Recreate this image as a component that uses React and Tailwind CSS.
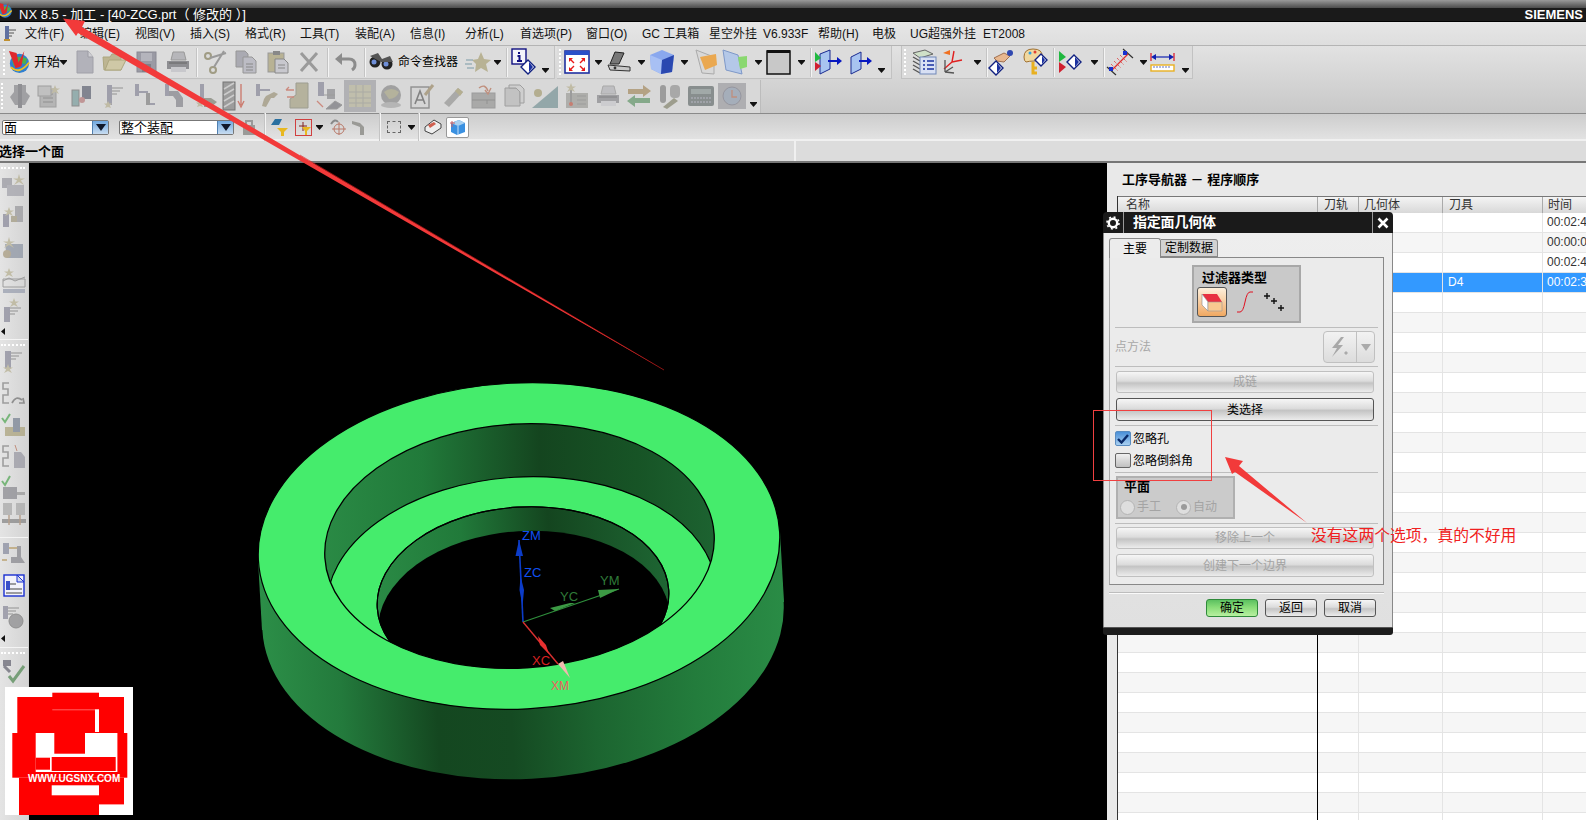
import React from "react";

const S = ({ w = 26, h = 26, vb = "0 0 26 26", children }) => (
  <svg width={w} height={h} viewBox={vb} className="block shrink-0">{children}</svg>
);
const Cell = ({ w, children }) => <div className={`${w} h-full flex items-center justify-center shrink-0`}>{children}</div>;
const Caret = ({ low }) => (
  <div className={low ? "pt-[17px]" : ""}>
    <svg width="7" height="5" viewBox="0 0 7 5" className="block"><path d="M0 0H7V1L3.5 5L0 1Z" fill="#111" /></svg>
  </div>
);
const Sep = () => <div className="w-[2px] h-[29px] shrink-0 bg-[#f4f4f4] border-l border-[#c4c4c4]" />;
const Grip = () => <div className="w-[2px] h-[26px] shrink-0 border-l-2 border-dotted border-white" />;

const T = ({ x = 9, y = 3, w = 5, h = 16, f = "#8c8c9c" }) => <rect x={x} y={y} width={w} height={h} fill={f} />;
const Burst = ({ x = 17, y = 6, r = 5 }) => (
  <path d={`M${x} ${y - r}L${x + 1.3} ${y - 1.5}L${x + r} ${y - 1.6}L${x + 1.8} ${y + .5}L${x + r - 1} ${y + r - 1}L${x} ${y + 2}L${x - r + 1} ${y + r - 1}L${x - 1.8} ${y + .5}L${x - r} ${y - 1.6}L${x - 1.3} ${y - 1.5}Z`} fill="#b8b294" />
);
const Lines = ({ x = 14, y = 6 }) => <path d={`M${x} ${y}H${x + 11}M${x} ${y + 3}H${x + 8}M${x} ${y + 6}H${x + 5}`} stroke="#9a9a9a" strokeWidth="1.3" fill="none" />;

const NxLogo = ({ s = 25 }) => (
  <S w={s} h={s}>
    <ellipse cx="14" cy="14" rx="10" ry="10" fill="#2f7fd0" />
    <path d="M6 9Q14 5 22 9L20 15Q14 11 8 17Z" fill="#4fb04a" />
    <path d="M5 18Q14 26 24 13" stroke="#f0c020" strokeWidth="2" fill="none" />
    <path d="M3 1L11 3L13 13L19 1L16 17L10 19Z" fill="#e0282c" />
  </S>
);
const NewDoc = () => <S><path d="M5 2H16L21 8V24H5Z" fill="#b2b2ba" stroke="#a0a0a8" /><path d="M16 2V8H21" fill="#cfcfd4" stroke="#9c9ca4" /></S>;
const Open = () => <S><path d="M2 8H9L11 5H20V21H3Z" fill="#bdb592" stroke="#aca67f" /><path d="M4 21L8 11H25L20 21Z" fill="#cfc8a6" stroke="#aca67f" /></S>;
const Save = () => <S><rect x="4" y="3" width="19" height="20" fill="#9a9aa4" stroke="#8a8a94" /><rect x="8" y="4" width="11" height="8" fill="#b4b4bc" /><rect x="9" y="15" width="9" height="8" fill="#808088" /></S>;
const Printer = () => <S><path d="M8 3H19L21 11H6Z" fill="#b6b6ba" stroke="#999" /><path d="M2 12H24V20H2Z" fill="#8e8e92" /><rect x="6" y="18" width="15" height="5" fill="#c8c8cc" /><path d="M4 14H22" stroke="#666" /></S>;
const Scissors = () => <S><circle cx="6" cy="7" r="3" fill="none" stroke="#a09c84" strokeWidth="2" /><circle cx="11" cy="21" r="3" fill="none" stroke="#a09c84" strokeWidth="2" /><path d="M8 9L24 4M12 18L22 2" stroke="#9a9a9a" strokeWidth="2" /></S>;
const Copy = () => <S><path d="M3 2H12L15 5V18H3Z" fill="#aaaab2" stroke="#969696" /><path d="M10 8H19L23 12V24H10Z" fill="#bcbcc4" stroke="#969696" /><path d="M13 15H20M13 18H20M13 21H20" stroke="#888" /></S>;
const Paste = () => <S><rect x="3" y="4" width="16" height="19" fill="#b8b294" stroke="#999" /><rect x="8" y="2" width="7" height="4" fill="#888" /><path d="M10 10H19L23 14V24H10Z" fill="#c8c8ce" stroke="#888" /><path d="M13 16H20M13 19H20" stroke="#888" /></S>;
const Del = () => <S><path d="M5 4L21 22M21 4L5 22" stroke="#9a9a9a" strokeWidth="3" /></S>;
const Undo = () => <S><path d="M8 10H16Q22 10 22 16Q22 19 19 21" stroke="#8c8c8c" strokeWidth="3" fill="none" /><path d="M9 4V16L2 10Z" fill="#8c8c8c" /></S>;
const Binoc = () => <S><circle cx="7" cy="13" r="5.5" fill="#222" /><circle cx="19" cy="15" r="5.5" fill="#222" /><circle cx="6" cy="13" r="2.5" fill="#6f8fd8" /><circle cx="18" cy="15" r="2.5" fill="#6f8fd8" /><path d="M2 7L10 4L14 10L22 7L25 13L13 13Z" fill="#555" /></S>;
const StarG = () => <S><path d="M16 3L19 10L26 11L21 15L23 23L16 19L10 23L11 15L7 11L13 10Z" fill="#b8b294" /><path d="M1 11H8M0 15H7M2 19H9" stroke="#9bb0b8" strokeWidth="1.5" /></S>;
const Diamond = ({ x, y, r = 6 }) => <g><path d={`M${x} ${y - r}L${x + r} ${y}L${x} ${y + r}L${x - r} ${y}Z`} fill="#fff" stroke="#102080" strokeWidth="1.4" /><path d={`M${x + 1} ${y - r + 2}L${x + r - 2} ${y}L${x + 1} ${y + r - 2}Z`} fill="#1a30a0" /></g>;
const Info = () => <S w={28} h={28} vb="0 0 28 28"><rect x="1" y="1" width="14" height="15" fill="#f4f4fa" stroke="#101080" strokeWidth="1.4" /><path d="M8 4V6M6.5 8H8.5V13M6 13H11" stroke="#101080" strokeWidth="2" fill="none" /><Diamond x={17} y={19} r={7} /></S>;
const Fit = () => <S><rect x="1" y="2" width="24" height="22" fill="#fff" stroke="#2030a0" strokeWidth="1.6" /><rect x="1" y="2" width="24" height="4" fill="#2b50c8" /><path d="M5 9L9 9L5 13ZM21 9L17 9L21 13ZM5 22L9 22L5 18ZM21 22L17 22L21 18Z" fill="#e81818" /><path d="M6 10L10 14M20 10L16 14M6 21L10 17M20 21L16 17" stroke="#e81818" strokeWidth="1.4" /></S>;
const Scanner = () => <S><path d="M9 3L18 4L13 15L4 15Z" fill="#777" stroke="#222" /><path d="M2 16L24 18L24 22L4 21Z" fill="#c8c8c8" stroke="#333" /><circle cx="9" cy="19" r="1.4" fill="#333" /></S>;
const Cube = () => <S><path d="M13 1L25 6L23 23L12 25L2 20L1 6Z" fill="#8aa8ee" /><path d="M1 6L13 11L12 25L2 20Z" fill="#a8c0f4" /><path d="M13 11L25 6L23 23L12 25Z" fill="#2a48b0" /></S>;
const FolderBox = () => <S><path d="M4 1L10 24L22 25V8Z" fill="#d8d8d8" stroke="#aaa" /><path d="M8 8L24 5L25 16L13 21Z" fill="#eaa850" /></S>;
const GreenBox = () => <S><path d="M1 1L16 6L20 25L4 21Z" fill="#b4c8e8" stroke="#7e98c8" /><path d="M16 8L25 7L25 18L18 20Z" fill="#8ad870" /></S>;
const Square = () => <S><rect x="1" y="2" width="23" height="23" fill="#c8c8c8" stroke="#111" strokeWidth="1.5" /><rect x="1" y="1" width="23" height="3" fill="#111" /></S>;
const View1 = () => <S w={30} h={26} vb="0 0 30 26"><path d="M7 5L17 1V20L7 25Z" fill="#a8c4f0" stroke="#1a2a90" /><path d="M2 3L8 9L2 13Z" fill="#20b840" /><path d="M2 13L8 17L2 22Z" fill="#d02030" /><path d="M15 12H25" stroke="#0818c0" strokeWidth="2" /><path d="M24 8L29 12L24 16Z" fill="#0818c0" /></S>;
const View2 = () => <S><path d="M3 8L13 3V20L3 25Z" fill="#a8c4f0" stroke="#1a2a90" /><path d="M11 12H20" stroke="#0818c0" strokeWidth="2" /><path d="M19 8L24 12L19 16Z" fill="#0818c0" /></S>;
const Layers = () => <S w={28} h={28} vb="0 0 28 28"><path d="M3 5L15 2L23 6L10 10Z" fill="#cfe0c8" stroke="#666" /><path d="M3 9L10 13M3 13L10 17M3 17L10 21M3 21L10 25" stroke="#555" strokeWidth="1.4" /><rect x="10" y="9" width="16" height="17" fill="#d8e0f4" stroke="#7088b8" /><path d="M13 13H15M17 13H24M13 17H15M17 17H24M13 21H15M17 21H24" stroke="#1830a0" strokeWidth="1.4" /></S>;
const Csys = () => <S w={28} h={28} vb="0 0 28 28"><path d="M12 14L22 12M12 14L4 21M12 14L14 3" stroke="#e02020" strokeWidth="1.4" /><path d="M3 5L10 2V7Z" fill="#f07020" /><path d="M5 12V24M5 24L14 25M5 24L13 19" stroke="#555" strokeWidth="1.3" fill="none" /></S>;
const Hand = () => <S w={28} h={28} vb="0 0 28 28"><path d="M6 10L16 5L22 8L16 14L9 13Z" fill="#e8b890" stroke="#a07050" /><circle cx="22" cy="5" r="3" fill="#3048b0" /><Diamond x={8} y={20} r={7} /></S>;
const Palette = () => <S w={28} h={30} vb="0 0 28 30"><path d="M3 10Q3 2 12 2Q22 2 21 10Q20 15 14 14Q8 14 5 15Q3 14 3 10Z" fill="#f0d8a0" stroke="#a07030" /><circle cx="9" cy="6" r="1.5" fill="#30a0e0" /><circle cx="14" cy="5" r="1.5" fill="#e04030" /><path d="M12 15L12 26L16 26M12 21L16 21" stroke="#e8b020" strokeWidth="3" fill="none" /><Diamond x={20} y={13} r={6} /></S>;
const Play = () => <S w={30} h={26} vb="0 0 30 26"><path d="M2 2L9 8L2 13Z" fill="#20b840" /><path d="M2 13L9 18L2 24Z" fill="#d02030" /><Diamond x={17} y={13} r={7} /></S>;
const Ratchet = () => <S w={28} h={28} vb="0 0 28 28"><path d="M1 19L10 27M17 1L27 10" stroke="#333" strokeWidth="1.2" /><path d="M6 22L22 6" stroke="#e03030" strokeWidth="1.2" /><path d="M5 16L12 23M8 13L15 20M11 10L18 17M14 7L21 14" stroke="#e03030" strokeWidth="1" strokeDasharray="1 1" /><rect x="3" y="19" width="4" height="4" fill="#1830d0" /><rect x="17" y="3" width="4" height="4" fill="#1830d0" /></S>;
const Ruler = () => <S w={26} h={24} vb="0 0 26 24"><path d="M1 3V11M24 3V11" stroke="#e01020" strokeWidth="1.2" /><path d="M3 7H22" stroke="#1020b0" strokeWidth="1.2" /><path d="M1 7L6 4V10ZM24 7L19 4V10Z" fill="#1020b0" /><rect x="1" y="15" width="23" height="6" fill="#fff" stroke="#e8b020" strokeWidth="1.4" /><path d="M4 16V18M7 16V18M10 16V18M13 16V18M16 16V18M19 16V18" stroke="#6070c0" /></S>;

const grey = [
  <S><path d="M8 2H20V9L24 13L19 22H9L4 14L8 9Z" fill="#8e8e92" /><T x={12} y={1} w={4} h={24} f="#77777c" /></S>,
  <S><rect x="3" y="6" width="16" height="18" fill="#aaa" stroke="#8c8c8c" /><path d="M6 11H16M6 15H16M6 19H16" stroke="#777" /><rect x="1" y="3" width="13" height="10" fill="#b8b8b8" stroke="#8c8c8c" /><Burst x={18} y={7} r={5} /></S>,
  <S><rect x="4" y="7" width="7" height="16" fill="#7fa0a0" stroke="#777" /><rect x="14" y="3" width="9" height="13" fill="#666a78" /><circle cx="14" cy="17" r="3" fill="#b88080" /></S>,
  <S><T x={8} y={2} w={5} h={20} /><Lines x={13} y={5} /><Burst x={9} y={22} r={4} /></S>,
  <S><T x={5} y={1} w={4} h={12} /><T x={5} y={8} w={13} h={2} /><T x={16} y={10} w={4} h={12} f="#888" /><T x={20} y={20} w={5} h={2} /></S>,
  <S><T x={4} y={1} w={4} h={12} /><path d="M8 8H17L22 15V24H15V17L12 13H8Z" fill="#8a8a90" /></S>,
  <S><T x={8} y={1} w={4} h={20} /><path d="M12 15H19L25 19L19 24H12Z" fill="#86887c" /><Burst x={8} y={21} r={4} /></S>,
  <S w={30} h={30} vb="0 0 30 30"><rect x="2" y="1" width="12" height="28" fill="#888" stroke="#555" /><path d="M3 8L13 2M3 14L13 8M3 20L13 14M3 26L13 20" stroke="#c8c8c8" strokeWidth="1.5" /><path d="M20 3V24M17 20L20 26L23 20" stroke="#c86050" strokeWidth="1.4" fill="none" /></S>,
  <S><T x={2} y={1} w={4} h={12} /><T x={6} y={6} w={10} h={2} /><path d="M12 13L20 9L24 11L20 15L17 15L12 24L8 23L10 16Z" fill="#a09880" /></S>,
  <S w={28} h={30} vb="0 0 28 30"><path d="M12 2H24V27H6V18L12 14Z" fill="#aaa68a" stroke="#8a8a7a" /><path d="M2 9L10 9M2 9L5 6M3 16L10 16" stroke="#c87060" strokeWidth="1.3" /></S>,
  <S w={28} h={30} vb="0 0 28 30"><T x={3} y={1} w={6} h={14} /><rect x="12" y="8" width="8" height="10" fill="#909094" /><path d="M9 14H20M20 20L27 24L22 28H11Z" fill="#7d7d82" stroke="#888" /><path d="M2 20L8 26" stroke="#c87060" strokeWidth="1.3" /></S>,
  <S w={32} h={32} vb="0 0 32 32"><rect x="0" y="0" width="32" height="32" fill="#a4a4a8" /><rect x="5" y="5" width="22" height="22" fill="#b8b69e" /><path d="M5 12H27M5 18H27M5 23H27M12 5V27M19 5V27" stroke="#9c9c94" /></S>,
  <S><circle cx="13" cy="12" r="10" fill="#8e8e8e" /><path d="M6 9Q13 3 21 9Q18 16 11 16Z" fill="#a8a688" /><ellipse cx="13" cy="22" rx="10" ry="3" fill="#aaa" /></S>,
  <S w={28} h={28} vb="0 0 28 28"><rect x="3" y="5" width="18" height="21" fill="#d4d4d4" stroke="#777" strokeWidth="1.4" /><path d="M7 22L12 9L17 22M9 18H15" stroke="#666" strokeWidth="1.6" fill="none" /><path d="M17 13L25 3" stroke="#a09070" strokeWidth="3" /></S>,
  <S><path d="M4 20L18 5L23 9L9 24Z" fill="#9a9a98" /><path d="M15 8L20 13L23 9L18 5Z" fill="#a8a078" /></S>,
  <S w={28} h={28} vb="0 0 28 28"><rect x="2" y="11" width="23" height="15" fill="#9a9a98" stroke="#888" /><path d="M2 18H25M17 18V22" stroke="#7a7a7a" /><path d="M9 6Q15 1 18 9M15 8L18 12L21 6" stroke="#b87860" strokeWidth="1.4" fill="none" /></S>,
  <S><path d="M3 5H14L18 9V23H3Z" fill="#bbb" stroke="#8c8c8c" /><path d="M7 2H18L22 6V20H18V9L14 5H7Z" fill="#ccc" stroke="#8c8c8c" /></S>,
  <S w={32} h={28} vb="0 0 32 28"><path d="M2 26L28 4V26Z" fill="#7d979a" /><circle cx="8" cy="11" r="4" fill="#a8a078" /></S>,
  <S w={28} h={28} vb="0 0 28 28"><rect x="3" y="11" width="22" height="15" fill="#a0a09c" /><path d="M14 14H23M14 18H23M14 22H23" stroke="#888" /><path d="M8 4V22" stroke="#888" strokeWidth="2" /><Burst x={8} y={6} r={5} /><circle cx="8" cy="22" r="2" fill="#c06050" /></S>,
  <Printer />,
  <S w={28} h={28} vb="0 0 28 28"><path d="M3 12L3 7H18V3L26 9L18 15V12Z" fill="#a89068" /><path d="M25 16V21H10V25L2 19L10 13V16Z" fill="#6a9a70" /></S>,
  <S w={28} h={28} vb="0 0 28 28"><rect x="4" y="3" width="6" height="18" rx="3" fill="#888" /><rect x="14" y="3" width="10" height="13" rx="4" fill="#999" /><path d="M7 25L18 16L22 19L11 27Z" fill="#8a8a74" /></S>,
  <S w={28} h={26} vb="0 0 28 26"><rect x="1" y="3" width="26" height="20" rx="2" fill="#6e7676" /><rect x="4" y="6" width="20" height="5" fill="#8f9a98" /><path d="M4 15H24M4 19H24" stroke="#aab" strokeDasharray="2 1" /></S>,
  <S w={28} h={28} vb="0 0 28 28"><rect x="0" y="1" width="28" height="26" fill="#a0a0a4" /><circle cx="14" cy="14" r="9" fill="#94a0b0" stroke="#80808c" /><path d="M14 8V15H19" stroke="#b87860" strokeWidth="1.3" fill="none" /></S>,
];

const side1 = [
  <S><rect x="1" y="5" width="10" height="10" fill="#9a9aa2" /><rect x="6" y="12" width="17" height="11" fill="#a4a4ac" /><Burst x={18} y={7} r={6} /></S>,
  <S><T x={2} y={10} w={6} h={13} /><rect x="14" y="2" width="8" height="16" fill="#9a9a9e" /><rect x="10" y="12" width="6" height="6" fill="#a39c84" /><Burst x={8} y={8} r={5} /></S>,
  <S><path d="M4 8H22V22H6Z" fill="#8e96a4" /><circle cx="6" cy="18" r="4" fill="#a89c80" /><Burst x={8} y={7} r={6} /></S>,
  <S><path d="M2 12H24V20H2Z" fill="none" stroke="#888" /><path d="M2 14L8 11L14 14L24 10" stroke="#888" fill="none" /><path d="M2 22H24V26H2Z" fill="#9aa0b0" /><Burst x={8} y={6} r={5} /></S>,
  <S><T x={3} y={9} w={6} h={15} /><Lines x={9} y={10} /><Burst x={13} y={5} r={5} /></S>,
];
const side2 = [
  <S><T x={4} y={2} w={6} h={18} /><Lines x={10} y={4} /><Burst x={7} y={20} r={5} /></S>,
  <S><path d="M8 2H2V8H7V14H2V22H8" stroke="#888" strokeWidth="1.6" fill="none" /><path d="M11 22Q15 14 21 19M18 22L23 22L22 17" stroke="#777" strokeWidth="1.7" fill="none" /></S>,
  <S><path d="M1 5L4 9L9 1" stroke="#55a858" strokeWidth="2" fill="none" /><rect x="4" y="14" width="20" height="9" fill="#aca47e" /><rect x="12" y="5" width="7" height="14" fill="#7a8494" /></S>,
  <S><path d="M8 2H2V8H7V14H2V22H8" stroke="#888" strokeWidth="1.6" fill="none" /><path d="M13 8H20L24 13V24H13Z" fill="#9a9aa4" /><path d="M14 1L16 7" stroke="#b87860" /></S>,
  <S><path d="M1 7L4 11L9 2" stroke="#55a858" strokeWidth="2" fill="none" /><rect x="2" y="13" width="14" height="12" fill="#8c8c92" /><rect x="16" y="18" width="8" height="3" fill="#999" /></S>,
  <S><rect x="2" y="2" width="9" height="12" fill="#aaa" /><rect x="15" y="2" width="9" height="12" fill="#aaa" /><rect x="1" y="18" width="24" height="4" fill="#888" /><path d="M8 14V24M19 14V24" stroke="#a98b70" strokeWidth="1.4" /></S>,
];
const side3 = [
  <S><rect x="2" y="2" width="6" height="11" fill="#8a8ea0" /><path d="M8 7L18 7M1 19L6 19" stroke="#b09050" strokeWidth="1.5" /><path d="M10 16H16V5H20V16L24 22H10Z" fill="#8a8a90" /></S>,
  <S><rect x="3" y="2" width="20" height="21" fill="#f2f2fa" stroke="#1a30d0" strokeWidth="1.4" /><rect x="5" y="8" width="4" height="9" fill="#3a50c8" /><path d="M9 11H15M9 16H21M5 20H21" stroke="#444" /><path d="M16 2L23 9H16Z" fill="#cfd8ee" stroke="#1a30d0" /></S>,
  <S><T x={2} y={2} w={5} h={13} /><Lines x={7} y={4} /><circle cx="15" cy="17" r="7" fill="#8e8e90" stroke="#777" /></S>,
];

const menus = [
  ["文件(F)", "w-[55px]"], ["编辑(E)", "w-[55px]"], ["视图(V)", "w-[55px]"], ["插入(S)", "w-[55px]"], ["格式(R)", "w-[55px]"],
  ["工具(T)", "w-[55px]"], ["装配(A)", "w-[55px]"], ["信息(I)", "w-[55px]"], ["分析(L)", "w-[55px]"], ["首选项(P)", "w-[66px]"],
  ["窗口(O)", "w-[56px]"], ["GC 工具箱", "w-[67px]"], ["星空外挂", "w-[54px]"], ["V6.933F", "w-[55px]"], ["帮助(H)", "w-[54px]"],
  ["电极", "w-[38px]"], ["UG超强外挂", "w-[73px]"], ["ET2008", "w-[50px]"],
];

const Combo = ({ w, text }) => (
  <div className={`${w} h-[15px] shrink-0 flex bg-white border border-[#777] rounded-[2px]`}>
    <div className="flex-1 text-[13px] leading-[14px] text-black pl-[1px] overflow-hidden">{text}</div>
    <div className="w-[16px] bg-linear-to-b from-[#6fa8e0] to-[#c8dcf0] border-l border-[#5080b0] flex items-center justify-center">
      <svg width="10" height="7" viewBox="0 0 10 7"><path d="M0 0H10L5 7Z" fill="#10182a" /></svg>
    </div>
  </div>
);

const Btn = ({ children, strong, cls = "" }) => (
  <div className={`ml-[6px] w-[258px] ${cls} flex items-center justify-center text-[12px] rounded-[3px] border ${strong ? "border-[#555] text-black" : "border-[#c0c0c0] text-[#a4a4a4]"} bg-[linear-gradient(#f6f6f6,#dcdcdc_45%,#c4c4c4_55%,#ececec)]`}>{children}</div>
);
const HSep = () => <div className="mx-[5px] h-[1px] bg-[#bdbdbd]" />;
const FootBtn = ({ children, green, cls = "" }) => (
  <div className={`w-[52px] h-[18px] flex items-center justify-center text-[12px] text-black rounded-[3px] border ${green ? "border-[#2f8a3a] bg-[linear-gradient(#5cc060,#88dc78_45%,#b8f0a0)]" : "border-[#555] bg-[linear-gradient(#f6f6f6,#dcdcdc_45%,#c4c4c4_55%,#ececec)]"} ${cls}`}>{children}</div>
);

const Model = () => (
  <svg width="1078" height="657" viewBox="29 163 1078 657" className="block">
    <defs>
      <linearGradient id="outer" gradientUnits="userSpaceOnUse" x1="258" x2="786" y1="0" y2="0">
        <stop offset="0" stopColor="#2c8f48" /><stop offset=".15" stopColor="#237a3c" /><stop offset=".33" stopColor="#144720" />
        <stop offset=".47" stopColor="#154a22" /><stop offset=".63" stopColor="#1c6530" /><stop offset=".82" stopColor="#237c3c" /><stop offset="1" stopColor="#2a8c46" />
      </linearGradient>
      <linearGradient id="wall1" gradientUnits="userSpaceOnUse" x1="324" x2="716" y1="0" y2="0">
        <stop offset="0" stopColor="#2a8a45" /><stop offset=".25" stopColor="#217a3a" /><stop offset=".55" stopColor="#14451f" /><stop offset=".8" stopColor="#175426" /><stop offset="1" stopColor="#1d6331" />
      </linearGradient>
      <linearGradient id="wall2" gradientUnits="userSpaceOnUse" x1="377" x2="670" y1="0" y2="0">
        <stop offset="0" stopColor="#2a8a45" /><stop offset=".3" stopColor="#217a3a" /><stop offset=".6" stopColor="#14451f" /><stop offset="1" stopColor="#1e6633" />
      </linearGradient>
      <clipPath id="hole1"><ellipse cx="519.5" cy="546" rx="195" ry="122" transform="rotate(-3.5 519.5 546)" /></clipPath>
      <clipPath id="hole2"><ellipse cx="523" cy="599" rx="146" ry="92" transform="rotate(-3.5 523 599)" /></clipPath>
    </defs>
    <path d="M258 560L262 630L784 602L780 532Z" fill="url(#outer)" />
    <ellipse cx="523" cy="616" rx="261" ry="163" transform="rotate(-3 523 616)" fill="url(#outer)" />
    <ellipse cx="519" cy="546" rx="261" ry="163" transform="rotate(-3 519 546)" fill="#45ec6c" stroke="#000" strokeWidth="1.2" />
    <g clipPath="url(#hole1)">
      <rect x="320" y="420" width="400" height="250" fill="url(#wall1)" />
      <ellipse cx="521.5" cy="599" rx="195" ry="122" transform="rotate(-3.5 521.5 599)" fill="#45ec6c" stroke="#000" strokeWidth="1.2" />
      <ellipse cx="523" cy="599" rx="146" ry="92" transform="rotate(-3.5 523 599)" fill="url(#wall2)" stroke="#000" strokeWidth="1.2" />
      <g clipPath="url(#hole2)">
        <ellipse cx="524" cy="623" rx="146" ry="92" transform="rotate(-3.5 524 623)" fill="#000" />
      </g>
      <ellipse cx="523" cy="599" rx="146" ry="92" transform="rotate(-3.5 523 599)" fill="none" stroke="#000" strokeWidth="1.2" />
    </g>
    <ellipse cx="519.5" cy="546" rx="195" ry="122" transform="rotate(-3.5 519.5 546)" fill="none" stroke="#000" strokeWidth="1.3" />
    <path d="M523 622L519 540" stroke="#0c3cc8" strokeWidth="1.6" />
    <path d="M519 540L523 556L515.5 556Z" fill="#0c3cc8" />
    <path d="M520.5 576L524 590L522.5 606L519.5 590Z" fill="#0c3cc8" />
    <path d="M523 622L619 589" stroke="#2f8f3c" strokeWidth="1.3" />
    <path d="M619 589L600 598L598 590Z" fill="#3c9a44" />
    <path d="M550 608L570 603L575 603L555 611Z" fill="#3c9a44" />
    <path d="M523 622L558 664" stroke="#d83030" strokeWidth="1.4" />
    <path d="M538 636L546 645L549 654L540 645Z" fill="#e83030" />
    <path d="M570 678L558 664L563 661Z" fill="#f2b8b0" />
    <g fontFamily="'Liberation Sans',sans-serif" fontSize="13">
      <text x="522" y="540" fill="#1050f0">ZM</text>
      <text x="524" y="577" fill="#1050f0">ZC</text>
      <text x="600" y="585" fill="#2f7a38">YM</text>
      <text x="560" y="601" fill="#2f7a38">YC</text>
      <text x="532" y="665" fill="#d82020">XC</text>
      <text x="551" y="690" fill="#f06060" fontSize="12">XM</text>
    </g>
  </svg>
);

const rows = Array.from({ length: 31 }, (_, i) => i);
const times = ["00:02:4", "00:00:0", "00:02:4", "00:02:3"];

export default function App() {
  return (
    <div className="relative w-[1586px] h-[820px] overflow-hidden flex flex-col bg-black font-['Liberation_Sans','Noto_Sans_CJK_SC',sans-serif]">
      {/* Title */}
      <div className="h-[8px] shrink-0 bg-linear-to-b from-[#9a9a9a] to-[#4c4c4c]" />
      <div className="h-[14px] shrink-0 bg-[#1a1a1a] border-b border-black flex items-center justify-between">
        <div className="pl-[19px] text-white text-[13px] leading-[14px] whitespace-nowrap">NX 8.5 - 加工 - [40-ZCG.prt（ 修改的 ）]</div>
        <div className="pr-[3px] text-white text-[13px] font-bold leading-[14px]">SIEMENS</div>
      </div>
      <div className="absolute -left-[4px] top-[2px]"><NxLogo s={17} /></div>
      {/* Menu */}
      <div className="h-[24px] shrink-0 flex items-center bg-linear-to-b from-[#e6e6e6] to-[#dedede] border-b border-[#b4b4b4] text-[12px] text-[#111] whitespace-nowrap">
        <div className="w-[25px] shrink-0 pl-[3px]">
          <S w={14} h={18} vb="0 0 14 18"><rect x="2" y="1" width="4" height="15" fill="#6070a0" /><path d="M6 5H13M6 8H11M6 11H9" stroke="#555" /><path d="M1 15H7" stroke="#c09030" strokeWidth="2" /></S>
        </div>
        {menus.map(([t, w]) => <div key={t} className={`${w} shrink-0`}>{t}</div>)}
      </div>
      {/* Toolbars */}
      <div className="h-[68px] shrink-0 flex flex-col bg-linear-to-b from-[#e2e2e2] to-[#c8c8c8] border-b border-[#8a8a8a]">
        <div className="h-[34px] flex items-stretch">
          <div className="h-[33px] w-[555px] shrink-0 flex items-center border-r border-b border-[#c2c2c2] bg-[#dcdcdc] text-[13px] text-black">
            <div className="w-[3px]" /><Grip /><div className="w-[1px]" />
            <Cell w="w-[25px]"><NxLogo /></Cell>
            <div className="w-[29px] pl-[3px] shrink-0">开始</div>
            <Cell w="w-[6px]"><Caret /></Cell>
            <div className="w-[4px]" />
            <Cell w="w-[30px]"><NewDoc /></Cell>
            <Cell w="w-[28px]"><Open /></Cell>
            <Cell w="w-[36px]"><Save /></Cell>
            <Cell w="w-[28px]"><Printer /></Cell>
            <div className="w-[4px]" /><Sep />
            <Cell w="w-[34px]"><Scissors /></Cell>
            <Cell w="w-[28px]"><Copy /></Cell>
            <Cell w="w-[36px]"><Paste /></Cell>
            <Cell w="w-[26px]"><Del /></Cell>
            <div className="w-[5px]" /><Sep />
            <Cell w="w-[34px]"><Undo /></Cell>
            <div className="w-[1px]" /><Sep />
            <Cell w="w-[30px]"><Binoc /></Cell>
            <div className="w-[62px] pl-[2px] shrink-0 text-[12px] whitespace-nowrap">命令查找器</div>
            <div className="w-[4px]" />
            <Cell w="w-[32px]"><StarG /></Cell>
            <Cell w="w-[6px]"><Caret /></Cell>
            <div className="w-[6px]" /><Sep />
            <Cell w="w-[34px]"><Info /></Cell>
            <Cell w="w-[7px]"><Caret low /></Cell>
          </div>
          <div className="w-[2px] shrink-0" />
          <div className="h-[33px] w-[335px] shrink-0 flex items-center border-r border-b border-[#c2c2c2] bg-[#dcdcdc]">
            <div className="w-[2px]" /><Grip /><div className="w-[1px]" />
            <Cell w="w-[29px]"><Fit /></Cell>
            <div className="w-[4px]" /><Cell w="w-[6px]"><Caret /></Cell>
            <Cell w="w-[36px]"><Scanner /></Cell>
            <div className="w-[1px]" /><Cell w="w-[6px]"><Caret /></Cell>
            <Cell w="w-[36px]"><Cube /></Cell>
            <div className="w-[1px]" /><Cell w="w-[6px]"><Caret /></Cell>
            <Cell w="w-[36px]"><FolderBox /></Cell>
            <Cell w="w-[24px]"><GreenBox /></Cell>
            <div className="w-[8px]" /><Cell w="w-[6px]"><Caret /></Cell>
            <Cell w="w-[36px]"><Square /></Cell>
            <div className="w-[1px]" /><Cell w="w-[6px]"><Caret /></Cell>
            <div className="w-[6px]" /><Sep />
            <Cell w="w-[32px]"><View1 /></Cell>
            <Cell w="w-[34px]"><View2 /></Cell>
            <Cell w="w-[6px]"><Caret low /></Cell>
          </div>
          <div className="w-[9px] shrink-0" />
          <div className="h-[33px] w-[292px] shrink-0 flex items-center border-l border-r border-b border-[#c2c2c2] bg-[#dcdcdc]">
            <div className="w-[2px]" /><Grip /><div className="w-[3px]" />
            <Cell w="w-[30px]"><Layers /></Cell>
            <Cell w="w-[30px]"><Csys /></Cell>
            <div className="w-[5px]" /><Cell w="w-[6px]"><Caret /></Cell>
            <div className="w-[6px]" /><Sep />
            <Cell w="w-[28px]"><Hand /></Cell>
            <Cell w="w-[37px]"><Palette /></Cell>
            <Sep />
            <Cell w="w-[34px]"><Play /></Cell>
            <div className="w-[2px]" /><Cell w="w-[6px]"><Caret /></Cell>
            <div className="w-[6px]" /><Sep />
            <Cell w="w-[30px]"><Ratchet /></Cell>
            <div className="w-[5px]" /><Cell w="w-[6px]"><Caret /></Cell>
            <Cell w="w-[34px]"><Ruler /></Cell>
            <div className="w-[2px]" /><Cell w="w-[6px]"><Caret low /></Cell>
          </div>
        </div>
        <div className="h-[34px] w-[761px] flex items-center border-r border-[#bcbcbc] bg-[#d8d8d8]">
          <div className="w-[1px]" /><Grip />
          <div className="flex items-center h-full opacity-75">
            {grey.map((g, i) => <Cell key={i} w="w-[31px]">{g}</Cell>)}
          </div>
          <div className="w-[3px]" />
          <Cell w="w-[6px]"><Caret low /></Cell>
        </div>
      </div>
      {/* Selection bar */}
      <div className="h-[27px] shrink-0 pt-[1px] flex items-center bg-linear-to-b from-[#cdcdcd] to-[#e2e2e2] border-b-2 border-[#f0f0f0]">
        <div className="w-[2px]" />
        <Combo w="w-[107px]" text="面" />
        <div className="w-[10px]" />
        <Combo w="w-[115px]" text="整个装配" />
        <Cell w="w-[30px]"><S w={16} h={18} vb="0 0 16 18"><rect x="2" y="7" width="12" height="10" fill="#9a9a98" /><path d="M5 7V3H11V7" stroke="#999" strokeWidth="2" fill="none" /></S></Cell>
        <Sep />
        <Cell w="w-[27px]"><S w={20} h={20} vb="0 0 20 20"><path d="M1 8L5 2H12L9 8Z" fill="#2a70a0" /><path d="M7 11H18L14 15V19H11V15Z" fill="#e8b820" /></S></Cell>
        <Cell w="w-[20px]"><S w={17} h={17} vb="0 0 17 17"><rect x=".5" y=".5" width="16" height="16" fill="none" stroke="#d04040" /><path d="M8 3V12M4 7H12" stroke="#802020" /><path d="M7 8H16L12 12V16H10V12Z" fill="#e8b820" /></S></Cell>
        <Cell w="w-[12px]"><Caret /></Cell>
        <Cell w="w-[26px]"><S w={18} h={18} vb="0 0 18 18"><circle cx="10" cy="11" r="5" fill="none" stroke="#b87868" /><path d="M10 4V17M3 11H17" stroke="#b87868" /><path d="M2 6Q6 0 9 4" stroke="#888" strokeWidth="2" fill="none" /></S></Cell>
        <Cell w="w-[16px]"><S w={16} h={18} vb="0 0 16 18"><path d="M1 3L9 5L13 9V17H9V9L1 6Z" fill="#9a9a96" /></S></Cell>
        <div className="w-[12px]" /><Sep />
        <Cell w="w-[26px]"><div className="w-[14px] h-[12px] border border-dashed border-[#666]" /></Cell>
        <Cell w="w-[8px]"><Caret /></Cell>
        <div className="w-[3px]" /><Sep />
        <Cell w="w-[26px]"><S w={18} h={16} vb="0 0 18 16"><path d="M1 8L10 1L17 5V9L8 15L1 12Z" fill="#eee" stroke="#444" /><path d="M4 6L10 3L12 5L6 9Z" fill="#d06050" /></S></Cell>
        <div className="w-[23px] h-[21px] shrink-0 bg-white border border-[#999] rounded-[2px] flex items-center justify-center">
          <S w={17} h={17} vb="0 0 17 17"><path d="M2 4L10 1L16 4V13L8 16L2 13Z" fill="#3a90e0" /><path d="M2 4L9 7L16 4L10 1Z" fill="#a8d0f0" /><path d="M9 7V16" stroke="#c8e0f8" /><path d="M3 2V8M1 4H6" stroke="#d06060" /></S>
        </div>
      </div>
      {/* Status */}
      <div className="h-[22px] shrink-0 flex bg-[#dcdcdc] border-b-2 border-[#777] text-[13px] font-bold text-black leading-[21px]">
        <div className="w-[797px] whitespace-nowrap -ml-[1px] border-r-2 border-[#f0f0f0]">选择一个面</div>
      </div>
      {/* Main */}
      <div className="flex-1 min-h-0 flex">
        <div className="w-[29px] shrink-0 bg-linear-to-r from-[#e4e4e4] to-[#d4d4d4] border-r border-[#cccccc] flex flex-col">
          <div className="mt-[4px] ml-[1px] h-[2px] w-[24px] border-t-2 border-dotted border-white" />
          <div className="h-[2px]" />
          <div className="flex flex-col opacity-75">
            {[["h-[30px]", 0], ["h-[32px]", 1], ["h-[32px]", 2], ["h-[30px]", 3], ["h-[32px]", 4]].map(([h, i]) => (
              <div key={i} className={`${h} flex items-center justify-center`}>{side1[i]}</div>
            ))}
          </div>
          <div className="h-[8px] pl-[1px] flex items-center"><svg width="4" height="7" viewBox="0 0 4 7"><path d="M4 0V7L0 3.5Z" fill="#111" /></svg></div>
          <div className="mt-[4px] h-[1px] bg-[#f4f4f4]" />
          <div className="mt-[4px] ml-[1px] h-[2px] w-[24px] border-t-2 border-dotted border-white" />
          <div className="h-[1px]" />
          <div className="flex flex-col opacity-75">
            {[["h-[30px]", 0], ["h-[34px]", 1], ["h-[30px]", 2], ["h-[32px]", 3], ["h-[28px]", 4], ["h-[26px]", 5]].map(([h, i]) => (
              <div key={i} className={`${h} flex items-center justify-center`}>{side2[i]}</div>
            ))}
          </div>
          <div className="mt-[10px] h-[1px] bg-[#f4f4f4]" />
          <div className="h-[32px] flex items-center justify-center opacity-75">{side3[0]}</div>
          <div className="h-[32px] flex items-center justify-center">{side3[1]}</div>
          <div className="h-[30px] flex items-center justify-center opacity-75">{side3[2]}</div>
          <div className="h-[12px] pl-[1px] flex items-center"><svg width="4" height="7" viewBox="0 0 4 7"><path d="M4 0V7L0 3.5Z" fill="#111" /></svg></div>
          <div className="mt-[3px] h-[1px] bg-[#f4f4f4]" />
          <div className="mt-[4px] ml-[1px] h-[2px] w-[24px] border-t-2 border-dotted border-white" />
          <div className="h-[2px]" />
          <div className="h-[30px] flex items-center justify-center opacity-80">
            <S><rect x="2" y="2" width="8" height="6" fill="#70707c" /><path d="M3 8L9 14" stroke="#70707c" strokeWidth="3" /><path d="M8 18L12 23L23 8" stroke="#5e9060" strokeWidth="3" fill="none" /></S>
          </div>
        </div>
        <div className="w-[1078px] shrink-0 bg-black"><Model /></div>
        <div className="flex-1 min-w-0 bg-[#e9e9e9] flex flex-col">
          <div className="h-[33px] shrink-0 pl-[15px] pt-[8px] text-[13px] leading-[18px] font-bold text-black whitespace-nowrap">工序导航器 － 程序顺序</div>
          <div className="ml-[10px] flex-1 min-h-0 border-l border-[#333] bg-white overflow-hidden">
            <div className="h-[17px] flex border-t border-[#777] bg-linear-to-b from-[#f4f4f4] to-[#d8d8d8] text-[12px] leading-[16px] text-[#333]">
              <div className="w-[200px] pl-[8px] border-r border-[#aaa] shrink-0">名称</div>
              <div className="w-[41px] pl-[6px] border-r border-[#aaa] shrink-0">刀轨</div>
              <div className="w-[84px] pl-[5px] border-r border-[#aaa] shrink-0">几何体</div>
              <div className="w-[100px] pl-[6px] border-r border-[#aaa] shrink-0">刀具</div>
              <div className="flex-1 pl-[5px]">时间</div>
            </div>
            {rows.map((i) => (
              <div key={i} className={`h-[20px] flex text-[12px] leading-[19px] border-b border-[#e4e4e4] ${i === 3 ? "bg-[#3399ff] text-white" : i % 2 ? "bg-[#f6f6f6] text-[#333]" : "bg-white text-[#333]"}`}>
                <div className="w-[200px] border-r border-[#e4e4e4] shrink-0" />
                <div className="w-[41px] border-r border-[#e4e4e4] shrink-0" />
                <div className="w-[84px] border-r border-[#e4e4e4] shrink-0" />
                <div className="w-[100px] border-r border-[#e4e4e4] shrink-0 pl-[5px]">{i === 3 ? "D4" : ""}</div>
                <div className="flex-1 pl-[4px] overflow-hidden whitespace-nowrap">{times[i] || ""}</div>
              </div>
            ))}
          </div>
        </div>
      </div>

      {/* Column rule that runs through the table rows */}
      <div className="absolute left-[1317px] top-[213px] bottom-0 w-[1px] bg-black" />

      {/* Dialog */}
      <div className="absolute left-[1103px] top-[212px] w-[290px] h-[423px] flex flex-col">
        <div className="h-[21px] shrink-0 flex items-center bg-[#1a1a1a] rounded-t-[4px] text-white text-[14px] font-bold">
          <div className="w-[21px] h-full flex items-center justify-center border-r border-[#999]">
            <svg width="14" height="14" viewBox="0 0 14 14"><circle cx="7" cy="7" r="4.2" fill="none" stroke="#fff" strokeWidth="2.4" /><circle cx="7" cy="7" r="6" fill="none" stroke="#fff" strokeWidth="1.6" strokeDasharray="2 2.7" /></svg>
          </div>
          <div className="flex-1 pl-[9px] whitespace-nowrap tracking-[-.2px]">指定面几何体</div>
          <div className="w-[21px] h-full flex items-center justify-center border-l border-[#999]">
            <svg width="12" height="12" viewBox="0 0 12 12"><path d="M1.5 1.5L10.5 10.5M10.5 1.5L1.5 10.5" stroke="#fff" strokeWidth="2.6" /></svg>
          </div>
        </div>
        <div className="h-[394px] shrink-0 bg-linear-to-b from-[#eeeeee] to-[#e0e0e0] border-x border-[#888] pl-[5px] flex flex-col">
          <div className="mt-[4px] h-[20px] flex items-end text-[12px] text-black">
            <div className="w-[52px] h-[20px] bg-[#ececec] border border-b-0 border-[#888] rounded-t-[3px] flex items-center justify-center relative top-[1px]">主要</div>
            <div className="w-[57px] h-[18px] bg-[#d2d2d2] border border-l-0 border-[#888] rounded-tr-[3px] flex items-center justify-center">定制数据</div>
          </div>
          <div className="w-[275px] h-[328px] border border-[#888] border-l-[#aaa] flex flex-col bg-[#ebebeb]">
            <div className="mt-[7px] self-center w-[109px] h-[58px] bg-[#c9c9c9] border-2 border-[#a8a8a8] flex flex-col pl-[3px]">
              <div className="pl-[5px] pt-[1px] text-[13px] leading-[19px] font-bold text-black">过滤器类型</div>
              <div className="flex items-center h-[30px]">
                <div className="w-[30px] h-[30px] rounded-[3px] border border-[#555] bg-linear-to-b from-[#fdf0dc] to-[#f0a860] flex items-center justify-center">
                  <S w={24} h={24} vb="0 0 24 24"><path d="M2 4H17L22 12H8Z" fill="#e83040" /><path d="M2 4L8 12V21L2 15Z" fill="#fff" stroke="#888" strokeWidth=".6" /><path d="M8 12H22V21H8Z" fill="#f8c890" stroke="#999" strokeWidth=".6" /></S>
                </div>
                <div className="w-[36px] flex justify-center"><svg width="18" height="22" viewBox="0 0 18 22"><path d="M1 21H4Q7 21 9 11Q11 1 14 1H17" fill="none" stroke="#e01020" strokeWidth="1" /></svg></div>
                <svg width="22" height="20" viewBox="0 0 22 20"><path d="M4 1V7M1 4H7M11 6V12M8 9H14M18 13V19M15 16H21" stroke="#111" strokeWidth="1.4" /></svg>
              </div>
            </div>
            <div className="mt-[4px]"><HSep /></div>
            <div className="mt-[3px] h-[32px] ml-[5px] w-[260px] flex items-center justify-between text-[12px] text-[#a8a8a8]">
              <div>点方法</div>
              <div className="w-[52px] h-[32px] flex rounded-[4px] border border-[#c0c0c0] bg-linear-to-b from-[#f2f2f2] to-[#dcdcdc]">
                <div className="flex-1 border-r border-[#c0c0c0] flex items-center justify-center">
                  <svg width="22" height="22" viewBox="0 0 22 22"><path d="M12 1L3 12H8L3 21L14 9H9L15 1Z" fill="#a8a8a8" /><path d="M17 15L19 17L17 19L15 17Z" fill="#aaa" /></svg>
                </div>
                <div className="w-[17px] flex items-center justify-center"><svg width="10" height="7" viewBox="0 0 10 7"><path d="M0 0H10L5 7Z" fill="#aaa" /></svg></div>
              </div>
            </div>
            <div className="mt-[3px]"><HSep /></div>
            <Btn cls="mt-[4px] h-[22px]">成链</Btn>
            <Btn strong cls="mt-[5px] h-[23px]">类选择</Btn>
            <div className="mt-[4px]"><HSep /></div>
            <div className="mt-[5px] h-[15px] ml-[5px] flex items-center text-[12px] text-black">
              <div className="w-[16px] h-[15px] mr-[2px] rounded-[2px] border border-[#5a8cc0] bg-linear-to-b from-[#4a90d8] to-[#a8cff0] flex items-center justify-center">
                <svg width="12" height="10" viewBox="0 0 12 10"><path d="M1 5L4.5 8.5L11 1" stroke="#0a2a68" strokeWidth="2.4" fill="none" /></svg>
              </div>忽略孔
            </div>
            <div className="mt-[7px] h-[15px] ml-[5px] flex items-center text-[12px] text-black">
              <div className="w-[16px] h-[15px] mr-[2px] rounded-[2px] border border-[#666] bg-linear-to-b from-[#f0f0f0] to-[#c0c0c0]" />忽略倒斜角
            </div>
            <div className="mt-[4px]"><HSep /></div>
            <div className="mt-[3px] ml-[6px] w-[119px] h-[43px] bg-[#cbcbcb] border-2 border-[#b0b0b0] text-[12px]">
              <div className="pl-[6px] text-[13px] leading-[17px] font-bold text-black">平面</div>
              <div className="flex items-center text-[#a4a4a4] mt-[3px]">
                <div className="ml-[2px] w-[15px] h-[15px] rounded-full border border-[#b4b4b4] bg-[#dedede]" />
                <div className="ml-[2px] w-[39px]">手工</div>
                <div className="w-[15px] h-[15px] rounded-full border border-[#b4b4b4] bg-[#dedede] flex items-center justify-center"><div className="w-[6px] h-[6px] rounded-full bg-[#9a9a9a]" /></div>
                <div className="ml-[2px]">自动</div>
              </div>
            </div>
            <div className="mt-[4px]"><HSep /></div>
            <Btn cls="mt-[3px] h-[22px]">移除上一个</Btn>
            <Btn cls="mt-[5px] h-[23px]">创建下一个边界</Btn>
          </div>
          <div className="mt-[7px] mr-[8px] h-[2px] bg-[#fafafa] border-t border-[#bdbdbd]" />
          <div className="mt-[5px] flex">
            <FootBtn green cls="ml-[97px]">确定</FootBtn>
            <FootBtn cls="ml-[7px]">返回</FootBtn>
            <FootBtn cls="ml-[7px]">取消</FootBtn>
          </div>
        </div>
        <div className="h-[8px] shrink-0 bg-[#1c1c1c] border-t border-[#555] rounded-b-[3px]" />
      </div>

      {/* Watermark */}
      <div className="absolute left-[5px] top-[687px] w-[128px] h-[128px] bg-white">
        <svg width="128" height="128" viewBox="0 0 128 128" className="block">
          <g fill="#ff0000">
            <rect x="47.3" y="5.7" width="46.7" height="9.3" /><rect x="12.3" y="10" width="106.7" height="36.7" />
            <rect x="7.3" y="46" width="115" height="44.7" /><rect x="14" y="90.7" width="105" height="26.7" /><rect x="14" y="116.7" width="80" height="11.3" />
          </g>
          <rect x="30.7" y="46" width="81.7" height="39" fill="#fff" />
          <g fill="#ff0000">
            <rect x="49.3" y="46" width="30.7" height="20.7" /><rect x="30.7" y="70.7" width="14.3" height="12" /><rect x="46.7" y="70" width="64" height="14" />
          </g>
          <rect x="90" y="22.3" width="4" height="22.7" fill="#fff" />
          <rect x="47.3" y="22.3" width="42.7" height="1" fill="#ff6060" />
          <rect x="46.7" y="98.3" width="47.3" height="10" fill="#fff" />
        </svg>
        <div className="absolute left-[23px] top-[85px] text-white text-[10px] leading-[14px] font-bold whitespace-nowrap">WWW.UGSNX.COM</div>
      </div>

      {/* Annotations */}
      <svg width="1586" height="820" viewBox="0 0 1586 820" className="absolute left-0 top-0 pointer-events-none">
        <path d="M63 18.5L85 21L82 27L664 370L78 33L76 36Z" fill="#f23a3a" />
        <path d="M664 370L300 155" stroke="#e02020" strokeWidth=".6" />
        <rect x="1093.5" y="410.5" width="118" height="70" fill="none" stroke="#f04040" />
        <path d="M1225 457L1243 461L1239 466L1307 523L1235 472L1232 474Z" fill="#f23a3a" />
      </svg>
      <div className="absolute left-[1311px] top-[527px] text-[#f02020] text-[15.8px] leading-[18px] whitespace-nowrap">没有这两个选项，真的不好用</div>
    </div>
  );
}
